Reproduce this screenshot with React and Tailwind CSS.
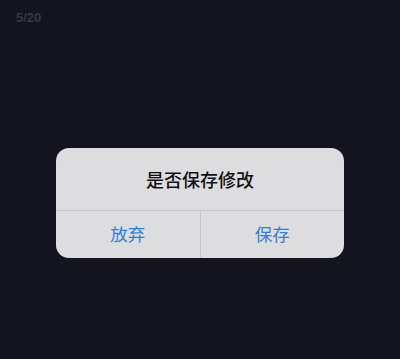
import React from 'react';

const App = () => {
  return (
    <div
      className="w-[400px] h-[359px] bg-[#14141f] flex flex-col"
      style={{ fontFamily: '"Noto Sans CJK SC", "Liberation Sans", sans-serif' }}
    >
      <div
        className="px-[16px] pt-[10px] text-[13px] leading-[16px] font-bold text-[#383845]"
        style={{ fontFamily: '"Liberation Sans", sans-serif' }}
      >
        5/20
      </div>

      <div className="flex justify-center mt-[122px]">
        <div className="w-[288px] h-[110px] rounded-[13px] bg-[#dddde0] flex flex-col overflow-hidden">
          <div className="h-[63px] flex items-center justify-center border-b border-[#c6c6ca] text-[18px] font-medium text-[#111111]">
            是否保存修改
          </div>
          <div className="flex-1 flex">
            <button className="flex-1 flex items-center justify-center border-r border-[#c6c6ca] text-[17.5px] text-[#2f7fd6]">
              放弃
            </button>
            <button className="flex-1 flex items-center justify-center text-[17.5px] text-[#2f7fd6]">
              保存
            </button>
          </div>
        </div>
      </div>
    </div>
  );
};

export default App;
